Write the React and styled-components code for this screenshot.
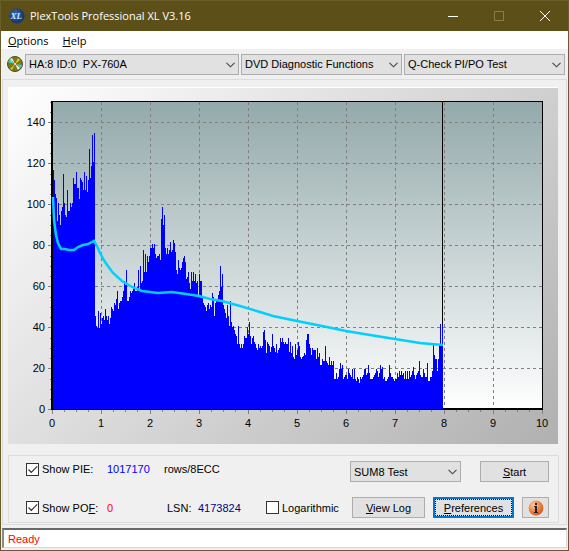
import { useState } from 'react';
import styled, { createGlobalStyle, css } from 'styled-components';

/// /////////////////////////////////////////////
// data
/// /////////////////////////////////////////////

// top edge of every PIE bar, one bar per pixel column
const Tops = [
  170, 180, 194, 198, 221, 203, 215, 225, 211, 207, 174, 203, 215, 217, 190, 211, 211, 203, 207, 203,
  178, 184, 184, 172, 188, 188, 199, 178, 180, 182, 190, 172, 190, 176, 192, 180, 149, 178, 166, 135,
  162, 133, 316, 326, 328, 311, 328, 313, 324, 318, 316, 320, 309, 316, 320, 316, 324, 318, 307, 309,
  311, 303, 305, 299, 291, 309, 303, 301, 301, 297, 291, 281, 285, 270, 301, 301, 297, 291, 293, 291,
  287, 283, 291, 291, 287, 270, 289, 266, 283, 281, 250, 272, 254, 272, 256, 262, 256, 248, 248, 244,
  248, 244, 254, 258, 256, 256, 254, 260, 219, 207, 225, 215, 248, 254, 248, 254, 250, 242, 252, 250,
  240, 243, 252, 270, 274, 260, 268, 270, 268, 262, 258, 256, 262, 279, 277, 272, 283, 289, 272, 281,
  272, 281, 274, 283, 281, 295, 274, 281, 281, 297, 303, 305, 307, 311, 305, 303, 309, 305, 307, 293,
  297, 316, 303, 301, 300, 295, 291, 266, 287, 274, 305, 309, 313, 318, 305, 316, 326, 301, 322, 327,
  326, 330, 334, 336, 344, 326, 344, 348, 344, 348, 344, 336, 338, 338, 327, 334, 322, 336, 344, 338,
  336, 342, 344, 348, 350, 344, 348, 346, 348, 346, 332, 330, 340, 353, 342, 344, 346, 352, 347, 334,
  346, 348, 352, 344, 353, 350, 348, 338, 342, 338, 342, 344, 342, 344, 344, 338, 352, 342, 353, 346,
  357, 359, 344, 355, 350, 342, 346, 357, 359, 357, 356, 353, 355, 340, 334, 334, 344, 348, 355, 348,
  350, 350, 350, 359, 348, 357, 353, 365, 365, 359, 361, 361, 346, 361, 363, 365, 357, 365, 361, 365,
  361, 379, 379, 373, 379, 377, 369, 363, 369, 365, 379, 377, 375, 375, 379, 369, 373, 375, 377, 369,
  379, 369, 379, 381, 377, 379, 383, 377, 379, 377, 375, 369, 369, 375, 373, 365, 373, 379, 379, 379,
  377, 375, 373, 369, 371, 377, 373, 365, 369, 367, 379, 377, 381, 381, 379, 377, 365, 373, 377, 377,
  379, 381, 379, 379, 373, 377, 371, 375, 371, 375, 373, 379, 371, 379, 371, 379, 371, 377, 375, 371,
  367, 375, 379, 375, 373, 371, 361, 375, 377, 377, 369, 373, 377, 377, 363, 381, 381, 377, 377, 371,
  345, 355, 359, 359, 371, 359, 345, 324, 345, 326,
];

const Average =
  '53,197 54,220 56,235 58,243 61,249 65,249 69,250 74,250 78,247 83,245 88,244 94,241 97,246 100,253 105,262 113,273 122,281 132,287 142,291 150,292 158,293 172,292 186,294 199,296 210,299 222,301 240,306 260,312 273,316 297,321 322,326 346,331 370,335 395,339 420,343 443,345';

const Drives = ['HA:8 ID:0  PX-760A'];
const Functions = ['DVD Diagnostic Functions'];
const Tests = ['Q-Check PI/PO Test'];
const Modes = ['SUM8 Test'];

/// /////////////////////////////////////////////
// styled
/// /////////////////////////////////////////////

const GlobalStyle = createGlobalStyle`
  * {
    box-sizing: border-box;
  }
  body {
    margin: 0;
    background: #f0f0f0;
    color: #000;
    font: 11px/16px 'Liberation Sans', Arial, sans-serif;
  }
`;

const Window = styled.div`
  display: flex;
  flex-direction: column;
  min-height: 100vh;
  border: 1px solid #6b5d29;
  background: #f0f0f0;
`;

const TitleBar = styled.header`
  display: flex;
  align-items: center;
  height: 30px;
  padding-left: 8px;
  background: #5c4f18;
  color: #fff;
`;

const Title = styled.h1`
  flex: 1;
  margin: 0 0 0 5px;
  font-family: 'Open Sans', sans-serif;
  font-size: 11px;
  font-weight: 400;
`;

const Caption = styled.button`
  width: 46px;
  height: 30px;
  padding: 0;
  border: 0;
  background: none;
  color: ${props => (props.disabled ? '#8a7d4c' : '#fff')};
  svg {
    display: block;
    margin: auto;
  }
`;

const MenuBar = styled.nav`
  display: flex;
  gap: 14px;
  height: 18px;
  padding-left: 7px;
  background: #fff;
`;

const MenuItem = styled.a`
  color: inherit;
  font-family: 'Open Sans', sans-serif;
  font-size: 11px;
  line-height: 20px;
  text-decoration: none;
`;

const Toolbar = styled.div`
  display: grid;
  grid-template-columns: 16px 214fr 161fr 161fr;
  align-items: center;
  column-gap: 2px;
  height: 30px;
  padding: 0 3px 0 6px;
`;

const SelectBox = styled.span`
  position: relative;
  display: block;
  svg {
    position: absolute;
    top: 8px;
    right: 4px;
    pointer-events: none;
  }
`;

const Select = styled.select`
  display: block;
  width: 100%;
  height: 21px;
  padding: 0 16px 0 3px;
  appearance: none;
  border: 1px solid #adadad;
  border-radius: 0;
  background: #e1e1e1;
  color: inherit;
  font: inherit;
  white-space: pre;
`;

const Page = styled.main`
  flex: 1;
  margin: 0 1px;
  padding: 7px 7px 1px 5px;
  border: 1px solid #dcdcdc;
`;

const Panel = styled.div`
  margin-right: 1px;
  border-top: 1px solid #fff;
  background: linear-gradient(135deg, #fff, #b0b0b0);
`;

const Chart = styled.svg`
  display: block;
  width: 100%;
`;

const Group = styled.section`
  display: grid;
  grid-template-columns: 1fr auto;
  row-gap: 15px;
  align-items: center;
  margin-top: 11px;
  padding: 5px 9px 4px 17px;
  border: 1px solid #dcdcdc;
`;

const Row = styled.div`
  display: flex;
  align-self: ${props => (props.$top ? 'start' : 'center')};
  align-items: center;
  justify-content: ${props => (props.$end ? 'flex-end' : 'flex-start')};
  gap: ${props => props.$gap || 0}px;
`;

const Mode = styled.div`
  width: 111px;
`;

const CheckLabel = styled.label`
  position: relative;
  display: flex;
  align-items: center;
  gap: 3px;
  width: ${props => (props.$width ? `${props.$width}px` : 'auto')};
  svg {
    position: absolute;
    left: 2px;
    pointer-events: none;
  }
`;

const CheckBox = styled.input`
  width: 13px;
  height: 13px;
  margin: 0;
  appearance: none;
  border: 1px solid #333;
  background: #fff;
  & + svg {
    visibility: hidden;
  }
  &:checked + svg {
    visibility: visible;
  }
`;

const Value = styled.output`
  width: ${props => props.$width}px;
  color: ${props => props.color};
`;

const Unit = styled.span`
  width: ${props => (props.$width ? `${props.$width}px` : 'auto')};
`;

const Button = styled.button`
  display: flex;
  align-items: center;
  justify-content: center;
  width: ${props => props.$width}px;
  height: 21px;
  padding: 0;
  border: 1px solid #adadad;
  background: #e1e1e1;
  color: inherit;
  font: inherit;
  ${props =>
    props.$active
      ? css`
          border: 2px solid #0078d7;
          outline: 1px dotted #000;
          outline-offset: -3px;
        `
      : null};
`;

const StatusBar = styled.footer`
  height: 20px;
  margin: 3px 1px 2px;
  padding-left: 4px;
  border: 1px solid #d8d8d8;
  border-top: 2px solid #696969;
  border-left: 2px solid #8a8a8a;
  background: #fff;
  color: #f00;
  line-height: 18px;
`;

/// /////////////////////////////////////////////
// icons
/// /////////////////////////////////////////////

const LogoIcon = () => (
  <svg width="16" height="16" viewBox="0 0 16 16">
    <defs>
      <radialGradient id="logo" cx="0.4" cy="0.4">
        <stop offset="0" stopColor="#3a6fb5" />
        <stop offset="1" stopColor="#153a73" />
      </radialGradient>
    </defs>
    <circle cx="8" cy="8" r="7.6" fill="url(#logo)" />
    <text x="1.5" y="11" fill="#d8e4f4" fontFamily="Liberation Serif, serif" fontSize="9" fontStyle="italic" fontWeight="bold">
      XL
    </text>
  </svg>
);

const DiscIcon = () => (
  <svg width="16" height="16" viewBox="0 0 16 16">
    <circle cx="8" cy="8" r="7.5" fill="#7b7b10" stroke="#4a4a3a" />
    <path d="M8 8 1 6 3 3Z" fill="#30e0d0" />
    <path d="M8 8 3 3 5 2Z" fill="#f4f4e0" />
    <path d="M8 8 11 2 13 4Z" fill="#e0d020" />
    <path d="M8 8 15 9 14 12Z" fill="#28d8e0" />
    <path d="M8 8 13 12 11 14Z" fill="#f4f4e0" />
    <path d="M8 8 3 13 5 14Z" fill="#d8d020" />
    <circle cx="8" cy="8" r="1.5" fill="#f4f4f4" stroke="#c02020" strokeWidth="0.6" />
  </svg>
);

const Chevron = () => (
  <svg width="9" height="6" viewBox="0 0 9 6">
    <path d="M0.5 0.8 4.5 4.8 8.5 0.8" fill="none" stroke="#444" strokeWidth="1.1" />
  </svg>
);

const Tick = () => (
  <svg width="10" height="9" viewBox="0 0 10 9">
    <path d="M0.5 4.5 3.3 7.3 9.2 1.4" fill="none" stroke="#333" strokeWidth="1.2" />
  </svg>
);

const InfoIcon = () => (
  <svg width="16" height="16" viewBox="0 0 16 16">
    <defs>
      <radialGradient id="info" cx="0.35" cy="0.3" r="0.75">
        <stop offset="0" stopColor="#ffc9a0" />
        <stop offset="0.5" stopColor="#f08a4a" />
        <stop offset="1" stopColor="#c85a20" />
      </radialGradient>
    </defs>
    <circle cx="8" cy="8" r="7.4" fill="url(#info)" />
    <rect x="7" y="3" width="2" height="2" fill="#222" />
    <path d="M6 6h3v6h1v1H6v-1h1V7H6Z" fill="#222" />
  </svg>
);

/// /////////////////////////////////////////////
// component
/// /////////////////////////////////////////////

const Combo = ({ label, options }) => (
  <SelectBox>
    <Select aria-label={label}>
      {options.map(option => (
        <option key={option}>{option.replace(/ {2}/g, '\u00a0 ')}</option>
      ))}
    </Select>
    <Chevron />
  </SelectBox>
);

const range = (from, to) => Array.from({ length: to - from + 1 }, (_, i) => from + i);

// window coordinates are kept in the viewBox, 49px per GB and 41px per 20 errors
const Graph = ({ showBars }) => (
  <Chart viewBox="8 88 550 356" role="img" aria-label="PIE graph">
    <defs>
      <linearGradient id="plot" x1="0" y1="0" x2="0" y2="1">
        <stop offset="0" stopColor="#93a9ab" />
        <stop offset="1" stopColor="#fff" />
      </linearGradient>
    </defs>
    <rect x="52" y="101" width="491" height="309" fill="url(#plot)" />
    <g stroke="#808080" strokeDasharray="3 3" shapeRendering="crispEdges">
      {range(1, 9).map(i => (
        <line key={i} x1={52.5 + i * 49} x2={52.5 + i * 49} y1="102" y2="409" />
      ))}
      {range(1, 7).map(i => (
        <line key={i} x1="53" x2="542" y1={409.5 - i * 41} y2={409.5 - i * 41} />
      ))}
    </g>
    <g stroke="#808080" shapeRendering="crispEdges">
      {range(0, 40).map(i => {
        const x = Math.floor(52 + i * 12.25) + 0.5;
        return <line key={i} x1={x} x2={x} y1="410" y2={i % 4 ? 412 : 414} />;
      })}
      {range(0, 30).map(i => {
        const y = Math.ceil(409 - i * 10.25) + 0.5;
        return <line key={i} x1={i % 4 ? 50 : 48} x2="51" y1={y} y2={y} />;
      })}
    </g>
    <g shapeRendering="crispEdges">
      <rect x="51" y="101" width="2" height="309" />
      <rect x="51" y="101" width="492" height="1" />
      <rect x="542" y="101" width="1" height="309" />
      <rect x="51" y="408" width="492" height="2" />
      <rect x="442" y="101" width="1" height="308" />
      {showBars && <path d={Tops.map((top, i) => `M${53 + i} ${top}h1V409h-1Z`).join('')} fill="#00f" />}
    </g>
    <polyline points={Average} fill="none" stroke="#00cfff" strokeWidth="2.5" />
    {range(0, 10).map(i => (
      <text key={i} x={52 + i * 49} y="427" textAnchor="middle">
        {i}
      </text>
    ))}
    {range(0, 7).map(i => (
      <text key={i} x="45" y={413 - i * 41} textAnchor="end">
        {i * 20}
      </text>
    ))}
  </Chart>
);

const App = () => {
  const [pie, setPie] = useState(true);
  const [pof, setPof] = useState(true);
  const [log, setLog] = useState(false);

  return (
    <Window>
      <GlobalStyle />
      <TitleBar>
        <LogoIcon />
        <Title>PlexTools Professional XL V3.16</Title>
        <Caption aria-label="Minimize">
          <svg width="10" height="10">
            <path d="M0 5.5h10" stroke="currentColor" />
          </svg>
        </Caption>
        <Caption aria-label="Maximize" disabled>
          <svg width="10" height="10">
            <path d="M0.5 0.5h9v9h-9Z" fill="none" stroke="currentColor" />
          </svg>
        </Caption>
        <Caption aria-label="Close">
          <svg width="10" height="10">
            <path d="M0 0 10 10M10 0 0 10" stroke="currentColor" />
          </svg>
        </Caption>
      </TitleBar>
      <MenuBar>
        <MenuItem href="#options">
          <u>O</u>ptions
        </MenuItem>
        <MenuItem href="#help">
          <u>H</u>elp
        </MenuItem>
      </MenuBar>
      <Toolbar>
        <DiscIcon />
        <Combo label="Drive" options={Drives} />
        <Combo label="Function" options={Functions} />
        <Combo label="Test" options={Tests} />
      </Toolbar>
      <Page>
        <Panel>
          <Graph showBars={pie} />
        </Panel>
        <Group>
          <Row $top>
            <CheckLabel $width={81}>
              <CheckBox type="checkbox" checked={pie} onChange={() => setPie(!pie)} />
              <Tick />
              <span>Show PIE:</span>
            </CheckLabel>
            <Value $width={57} color="#00f">
              1017170
            </Value>
            <Unit>rows/8ECC</Unit>
          </Row>
          <Row $end $gap={19}>
            <Mode>
              <Combo label="Mode" options={Modes} />
            </Mode>
            <Button $width={69}>
              <span>
                <u>S</u>tart
              </span>
            </Button>
          </Row>
          <Row>
            <CheckLabel $width={81}>
              <CheckBox type="checkbox" checked={pof} onChange={() => setPof(!pof)} />
              <Tick />
              <span>
                Show PO<u>F</u>:
              </span>
            </CheckLabel>
            <Value $width={60} color="#f00">
              0
            </Value>
            <Unit $width={31}>LSN:</Unit>
            <Value $width={68} color="#00008b">
              4173824
            </Value>
            <CheckLabel>
              <CheckBox type="checkbox" checked={log} onChange={() => setLog(!log)} />
              <Tick />
              <span>Logarithmic</span>
            </CheckLabel>
          </Row>
          <Row $end $gap={8}>
            <Button $width={73}>
              <span>
                <u>V</u>iew Log
              </span>
            </Button>
            <Button $width={81} $active>
              <span>
                <u>P</u>references
              </span>
            </Button>
            <Button $width={27} aria-label="About">
              <InfoIcon />
            </Button>
          </Row>
        </Group>
      </Page>
      <StatusBar>Ready</StatusBar>
    </Window>
  );
};

export default App;
